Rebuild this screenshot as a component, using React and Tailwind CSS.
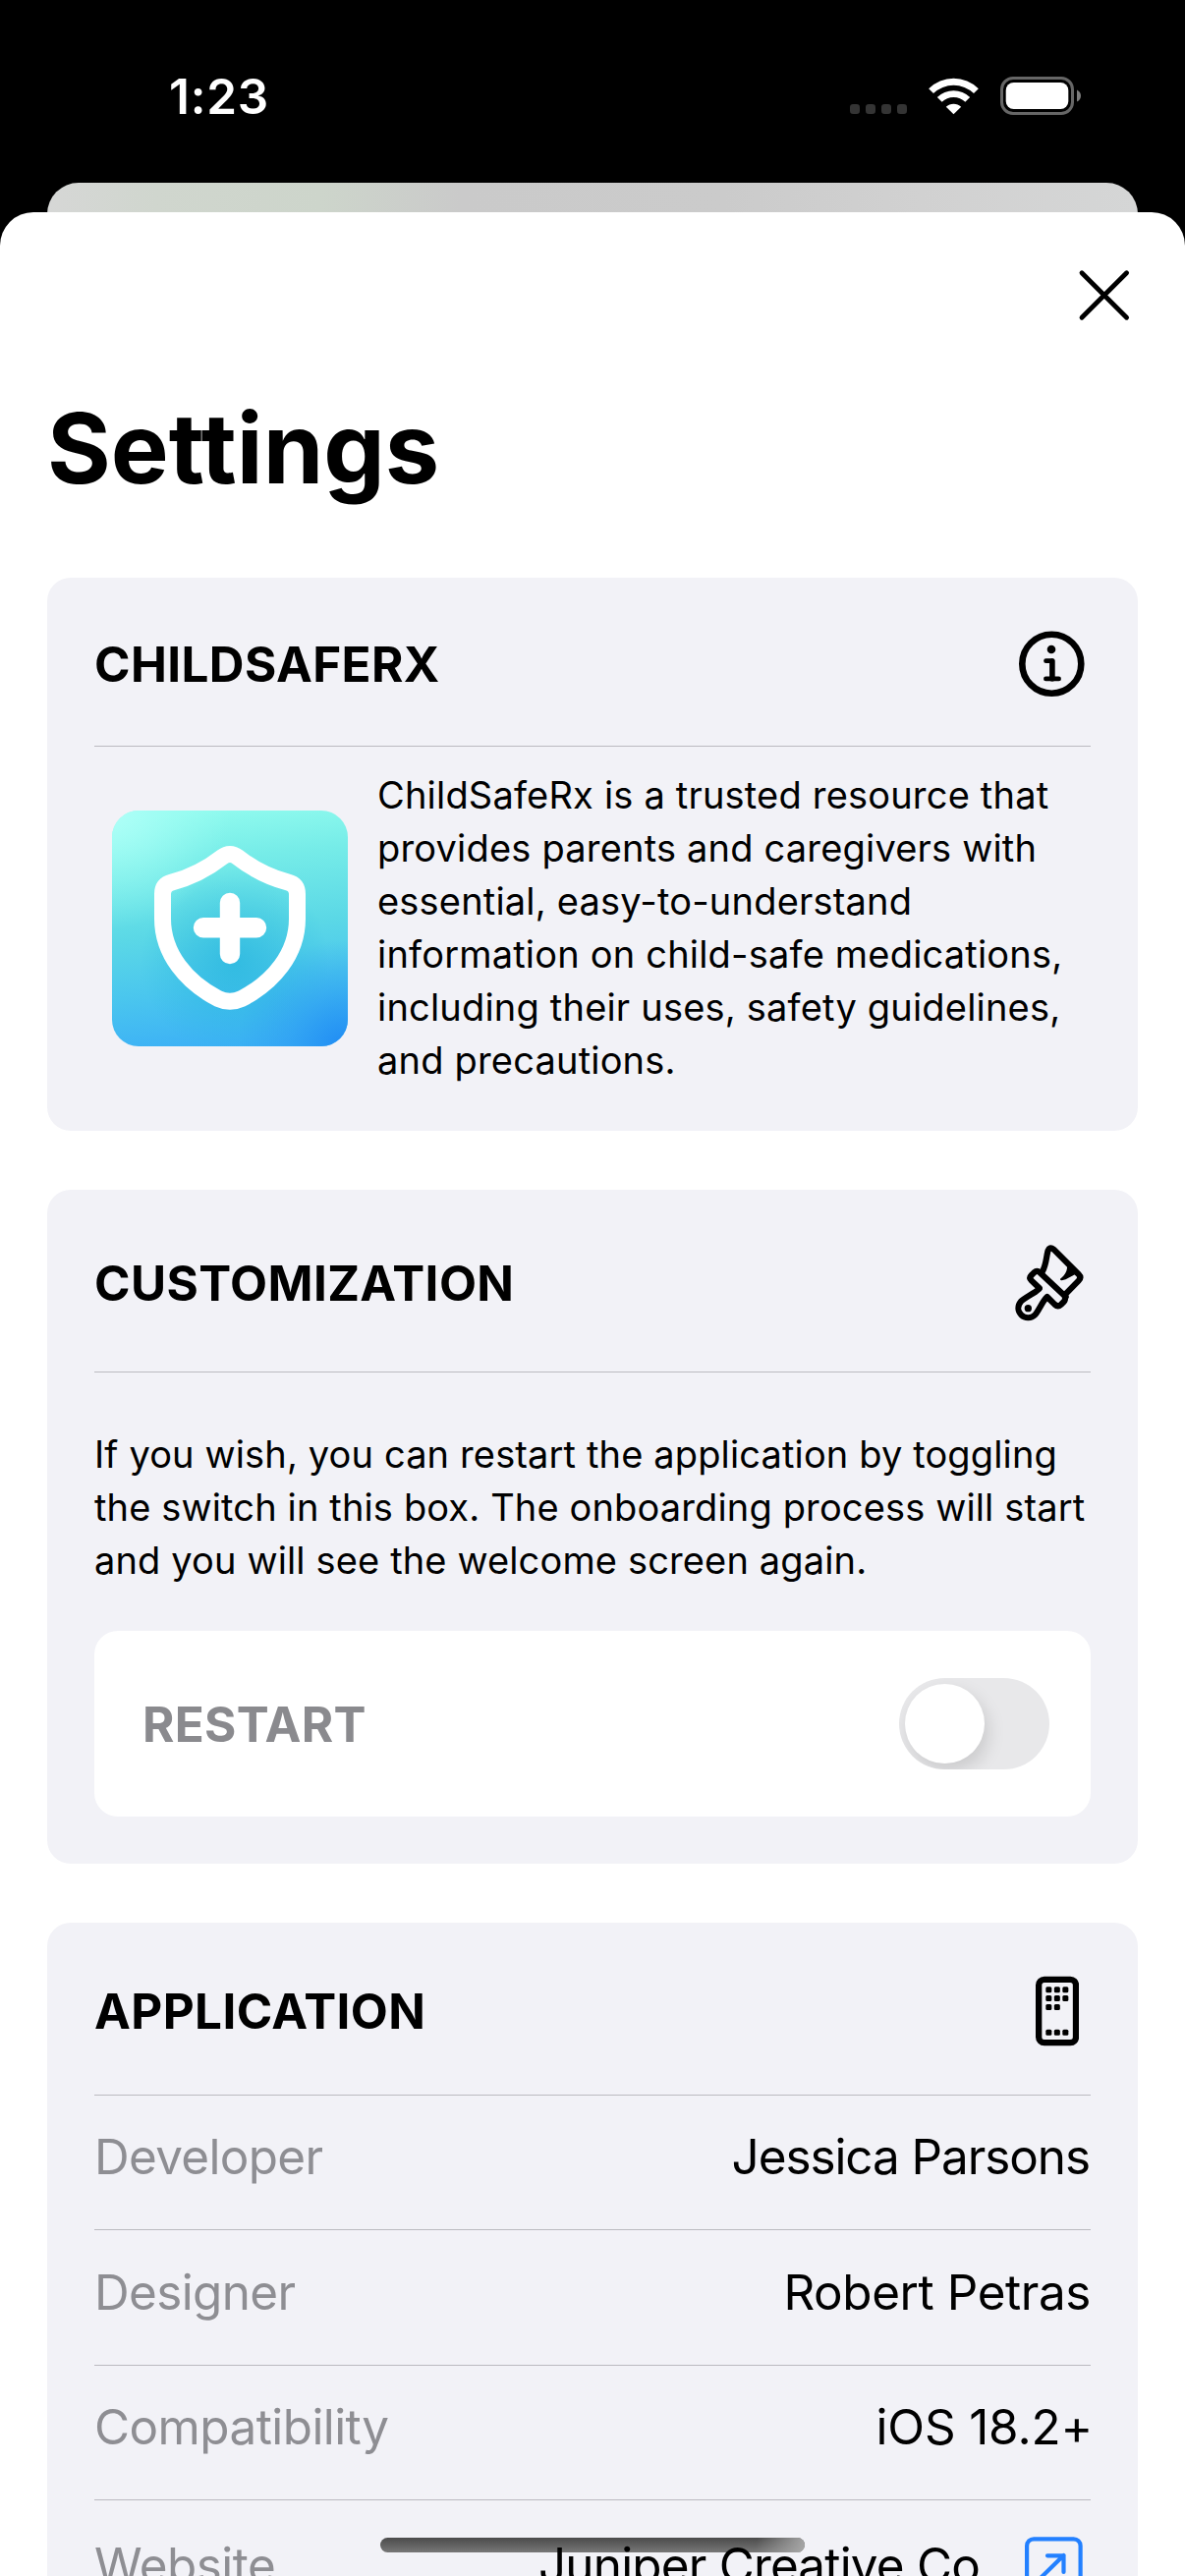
import React from "react";

function StatusBar() {
  return (
    <div className="flex h-[186px] items-start justify-between pl-[172px] pr-[105px] text-white">
      <div className="mt-[62px] text-[49.4px] font-semibold leading-[72px] tracking-[0.8px]">1:23</div>
      <div className="mt-[78px] flex h-[39px] items-start">
        <div className="mt-[28px] flex gap-[6px]">
          {[0, 1, 2, 3].map((i) => (
            <span key={i} className="size-[10px] rounded-[3.3px] bg-[#343434]" />
          ))}
        </div>
        <svg className="ml-[22px] h-[39px] w-[51px]" viewBox="0 0 153 117" fill="#fff">
          <path d="M0.500 36.500 A108 108 0 0 1 152.500 36.500 L138 51 A89 89 0 0 0 15 51 Z" />
          <path d="M26.500 63 A72 72 0 0 1 126.500 63 L112 77.500 A51 51 0 0 0 41 77.500 Z" />
          <path d="M53.500 92.500 A33 33 0 0 1 99.500 92.500 L76.500 115 Z" />
        </svg>
        <svg className="ml-[22px] h-[39px] w-[83px]" viewBox="0 0 83 39">
          <rect x="1.500" y="1.500" width="72" height="36" rx="11.500" fill="none" stroke="#666" strokeWidth="3" />
          <rect x="5.700" y="6" width="63.600" height="27" rx="8" fill="#fff" />
          <path d="M78 13.500 Q82 15.500 82 19.500 Q82 23.500 78 25.500 Z" fill="#7c7c7c" />
        </svg>
      </div>
    </div>
  );
}

function Rule({ className = "" }) {
  return <div className={`h-px shrink-0 bg-[#bbbac0] ${className}`} />;
}

function InfoIcon() {
  return (
    <svg className="mr-[6px] size-[68px]" viewBox="0 0 68 68" fill="none" stroke="#000" strokeLinecap="round" strokeLinejoin="round">
      <circle cx="34.300" cy="33.700" r="30" strokeWidth="6.600" />
      <circle cx="34" cy="19" r="4.300" fill="#000" stroke="none" />
      <path d="M28.500 30.700 H34.800" strokeWidth="4.700" />
      <path d="M34.900 31 V48.800" strokeWidth="5.600" />
      <path d="M28.400 48.900 H41.600" strokeWidth="4.700" />
    </svg>
  );
}

function BrushIcon() {
  return (
    <svg className="mr-[7px] h-[80px] w-[71px]" viewBox="156 78 213 240" fill="none" stroke="#000" strokeWidth="18.500" strokeLinecap="round" strokeLinejoin="round">
      <path d="M243 162 C254 142 254 122 259 101 Q264 85 277 95 L353 171 Q363 181 353 191 L312 233" />
      <path d="M314 240 L234 165 Q226 158 217 166 L209 174 Q201 182 209 190 L233 213" />
      <path d="M233 215 C215 232 190 240 177 254 C166 267 167 284 178 295 C190 307 209 306 220 295 C233 280 242 254 257 240 L280 263 Q290 272 299 264 L308 255 Q313 250 312 241" />
      <circle cx="199" cy="275" r="11" fill="#000" stroke="none" />
      <path d="M318 142 C320 160 312 174 297 185 Q296 190 302 190 C318 187 332 176 348 168 Z" fill="#000" stroke="none" />
    </svg>
  );
}

function PhoneIcon() {
  const dots = [
    [262, 135], [287.5, 135], [313, 135],
    [262, 161], [287.5, 161], [313, 161],
    [262, 188], [287.5, 188],
    [262, 265], [287.5, 265], [313, 265],
  ];
  return (
    <svg className="mr-[12px] h-[72px] w-[44px]" viewBox="222 92 132 216">
      <rect x="231.500" y="103.500" width="113.500" height="193" rx="17" fill="none" stroke="#000" strokeWidth="19" />
      {dots.map(([x, y]) => (
        <rect key={`${x}-${y}`} x={x - 9} y={y - 9} width="18" height="18" rx="4.500" />
      ))}
    </svg>
  );
}

function AppLogo() {
  return (
    <svg className="ml-[18px] mt-[65px] size-[240px] shrink-0 rounded-[27px]" viewBox="0 0 240 240" fill="none">
      <defs>
        <linearGradient id="sky" x1="0.450" y1="0" x2="0.550" y2="1">
          <stop offset="0" stopColor="#8ffaee" />
          <stop offset="0.200" stopColor="#76ece8" />
          <stop offset="0.500" stopColor="#5bd8e6" />
          <stop offset="0.750" stopColor="#4ac6ee" />
          <stop offset="1" stopColor="#3cb0f6" />
        </linearGradient>
        <radialGradient id="light" cx="0" cy="0" r="0.500">
          <stop offset="0" stopColor="#b0fff8" />
          <stop offset="1" stopColor="#a0fff4" stopOpacity="0" />
        </radialGradient>
        <radialGradient id="deep" cx="0.980" cy="1" r="0.450">
          <stop offset="0" stopColor="#208cf4" />
          <stop offset="0.500" stopColor="#2898f2" stopOpacity="0.500" />
          <stop offset="1" stopColor="#2c9cf0" stopOpacity="0" />
        </radialGradient>
        <radialGradient id="core" cx="0.520" cy="0.640" r="0.400">
          <stop offset="0" stopColor="#22b2dc" stopOpacity="0.650" />
          <stop offset="1" stopColor="#22b2dc" stopOpacity="0" />
        </radialGradient>
      </defs>
      <rect width="240" height="240" fill="url(#sky)" />
      <rect width="240" height="240" fill="url(#light)" />
      <rect width="240" height="240" fill="url(#core)" />
      <rect width="240" height="240" fill="url(#deep)" />
      <path
        d="M120 44.500 Q116 44.500 112 47.500 C96 60 80 68 61 73 Q51.500 75.500 51.500 85 V110 C51.500 146 76 175 108 191.500 Q120 197 132 191.500 C164 175 188.500 146 188.500 110 V85 Q188.500 75.500 179 73 C160 68 144 60 128 47.500 Q124 44.500 120 44.500 Z"
        stroke="#fff"
        strokeWidth="17"
        strokeLinejoin="round"
      />
      <path d="M120 94 V146 M93 119.200 H147" stroke="#fff" strokeWidth="20.400" strokeLinecap="round" />
    </svg>
  );
}

function CardTitle({ children, icon }) {
  return (
    <div className="flex h-[72px] items-center justify-between">
      <h2 className="text-[49.4px] font-bold leading-[72px] tracking-[0.4px]">{children}</h2>
      {icon}
    </div>
  );
}

function Paragraph({ lines, className = "" }) {
  return (
    <p className={`whitespace-nowrap text-[38px] leading-[54px] ${className}`}>
      {lines.map((line) => (
        <span key={line} className="block">{line}</span>
      ))}
    </p>
  );
}

export default function App() {
  return (
    <div className="relative h-[2622px] w-[1206px] overflow-hidden bg-black font-['Inter',sans-serif] text-black">
      <StatusBar />
      <div className="mx-[48px] h-[75px] rounded-t-[32px] bg-[linear-gradient(90deg,#d6d7d6_0%,#d0d6ce_10%,#cdd5cb_25%,#cacaca_38%,#cbcbcb_62%,#d1d1d1_80%,#d5d6d6_100%)]" />

      <main className="-mt-[45px] h-[2460px] rounded-t-[34px] bg-white px-[48px]">
        <div className="flex justify-end pr-[6px] pt-[56px]">
          <svg className="size-[57px]" viewBox="0 0 57 57" stroke="#000" strokeWidth="4.800" strokeLinecap="round">
            <path d="M6 5.700 L51.600 51.300 M51.600 5.700 L6 51.300" />
          </svg>
        </div>
        <h1 className="mt-[67px] text-[99px] font-bold leading-[120px]">Settings</h1>

        <section className="mt-[72px] h-[563px] rounded-[24px] bg-[#f2f2f7] px-[48px] pt-[52px]">
          <CardTitle icon={<InfoIcon />}>CHILDSAFERX</CardTitle>
          <Rule className="mt-[47px]" />
          <div className="flex">
            <AppLogo />
            <Paragraph
              className="ml-[30px] mt-[22px] tracking-[0.19px]"
              lines={[
                "ChildSafeRx is a trusted resource that",
                "provides parents and caregivers with",
                "essential, easy-to-understand",
                "information on child-safe medications,",
                "including their uses, safety guidelines,",
                "and precautions.",
              ]}
            />
          </div>
        </section>

        <section className="mt-[60px] h-[686px] rounded-[24px] bg-[#f2f2f7] px-[48px] pt-[59px]">
          <CardTitle icon={<BrushIcon />}>CUSTOMIZATION</CardTitle>
          <Rule className="mt-[54px]" />
          <Paragraph
            className="mt-[56px] tracking-[0.14px]"
            lines={[
              "If you wish, you can restart the application by toggling",
              "the switch in this box. The onboarding process will start",
              "and you will see the welcome screen again.",
            ]}
          />
          <div className="mt-[45px] flex h-[189px] items-center justify-between rounded-[24px] bg-white pl-[49px] pr-[42px]">
            <span className="text-[49.4px] font-bold leading-[72px] tracking-[0.3px] text-[#8a8a8e]">RESTART</span>
            <span className="flex h-[93px] w-[153px] items-center overflow-hidden rounded-full bg-[#e8e8ea] pl-[6px]">
              <span className="size-[81px] rounded-full bg-white shadow-[4px_8px_18px_rgba(0,0,0,0.13)]" />
            </span>
          </div>
        </section>

        <section className="mt-[60px] h-[760px] rounded-[24px] bg-[#f2f2f7] px-[48px] pt-[54px]">
          <CardTitle icon={<PhoneIcon />}>APPLICATION</CardTitle>
          <Rule className="mt-[49px]" />
          <div className="text-[49.4px] leading-[72px]">
            <div className="flex h-[136px] justify-between pt-[26px]">
              <span className="tracking-[-0.65px] text-[#8e8e93]">Developer</span>
              <span className="mr-px tracking-[-1.05px]">Jessica Parsons</span>
            </div>
            <Rule />
            <div className="flex h-[137px] justify-between pt-[27px]">
              <span className="tracking-[-0.6px] text-[#8e8e93]">Designer</span>
              <span className="tracking-[-0.4px]">Robert Petras</span>
            </div>
            <Rule />
            <div className="flex h-[136px] justify-between pt-[26px]">
              <span className="tracking-[-0.55px] text-[#8e8e93]">Compatibility</span>
              <span className="-mr-[2px] tracking-[-0.15px]">iOS 18.2+</span>
            </div>
            <Rule />
            <div className="flex pt-[30px]">
              <span className="tracking-[-0.5px] text-[#8e8e93]">Website</span>
              <span className="relative z-10 ml-auto mr-[46px] tracking-[-0.8px]">Juniper Creative Co</span>
              <svg className="mr-[8px] mt-[7px] size-[59px]" viewBox="0 0 59 59" fill="none" stroke="#2380ff" strokeWidth="4.200" strokeLinejoin="round" strokeLinecap="round">
                <rect x="2.100" y="2.300" width="54.500" height="54.500" rx="7" />
                <path d="M16 42 L39.500 19 M23 19.300 H39.500 V36" />
              </svg>
            </div>
          </div>
        </section>
      </main>

      <div className="absolute left-[387px] top-[2583px] h-[15px] w-[432px] overflow-hidden rounded-full bg-[linear-gradient(180deg,#4b4b4b,#777777)]">
        <div className="ml-auto h-full w-[54px] bg-[linear-gradient(100deg,transparent_10%,#a8a8a8_100%)]" />
      </div>
    </div>
  );
}
